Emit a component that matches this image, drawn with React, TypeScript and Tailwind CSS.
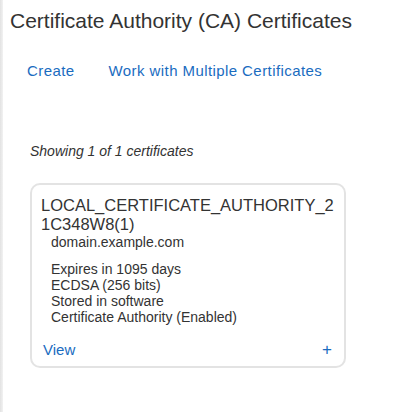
import React from 'react';

const details = [
  'Expires in 1095 days',
  'ECDSA (256 bits)',
  'Stored in software',
  'Certificate Authority (Enabled)',
];

export default function App() {
  return (
    <div className="flex min-h-[412px] w-full bg-white text-[#333333] font-['Liberation_Sans',Arial,sans-serif]">
      {/* left gutter */}
      <div className="w-[3px] shrink-0 bg-gradient-to-r from-[#e2e2e2] to-[#f2f2f2]" />

      <div className="flex-1 pl-[7px] pt-[8px]">
        <h1 className="text-[21px] leading-[25px] font-normal text-[#333333] whitespace-nowrap">
          Certificate Authority (CA) Certificates
        </h1>

        <div className="mt-[28px] flex gap-[34px] pl-[17px] text-[15px] leading-[20px] tracking-[0.42px] text-[#1a6cbf]">
          <a className="cursor-pointer">Create</a>
          <a className="cursor-pointer">Work with Multiple Certificates</a>
        </div>

        <div className="pl-[20px]">
          <p className="mt-[61px] text-[14px] leading-[19px] italic text-[#333333]">
            Showing 1 of 1 certificates
          </p>

          <div className="mt-[22px] w-[316px] rounded-[10px] border-2 border-[#e3e3e3] pl-[9px] pr-[8px] pt-[11px] pb-[6px]">
            <div className="text-[16.5px] leading-[19px] break-all">
              LOCAL_CERTIFICATE_AUTHORITY_21C348W8(1)
            </div>
            <div className="pl-[10px] text-[14px] leading-[16px]">
              <div>domain.example.com</div>
              <div className="mt-[11px]">
                {details.map((d) => (
                  <div key={d}>{d}</div>
                ))}
              </div>
            </div>
            <div className="mt-[15px] flex items-center justify-between pl-[2px] pr-[4px] text-[15px] leading-[20px] text-[#1a6cbf]">
              <a className="cursor-pointer">View</a>
              <span className="cursor-pointer text-[17px] leading-[20px]">+</span>
            </div>
          </div>
        </div>
      </div>
    </div>
  );
}
